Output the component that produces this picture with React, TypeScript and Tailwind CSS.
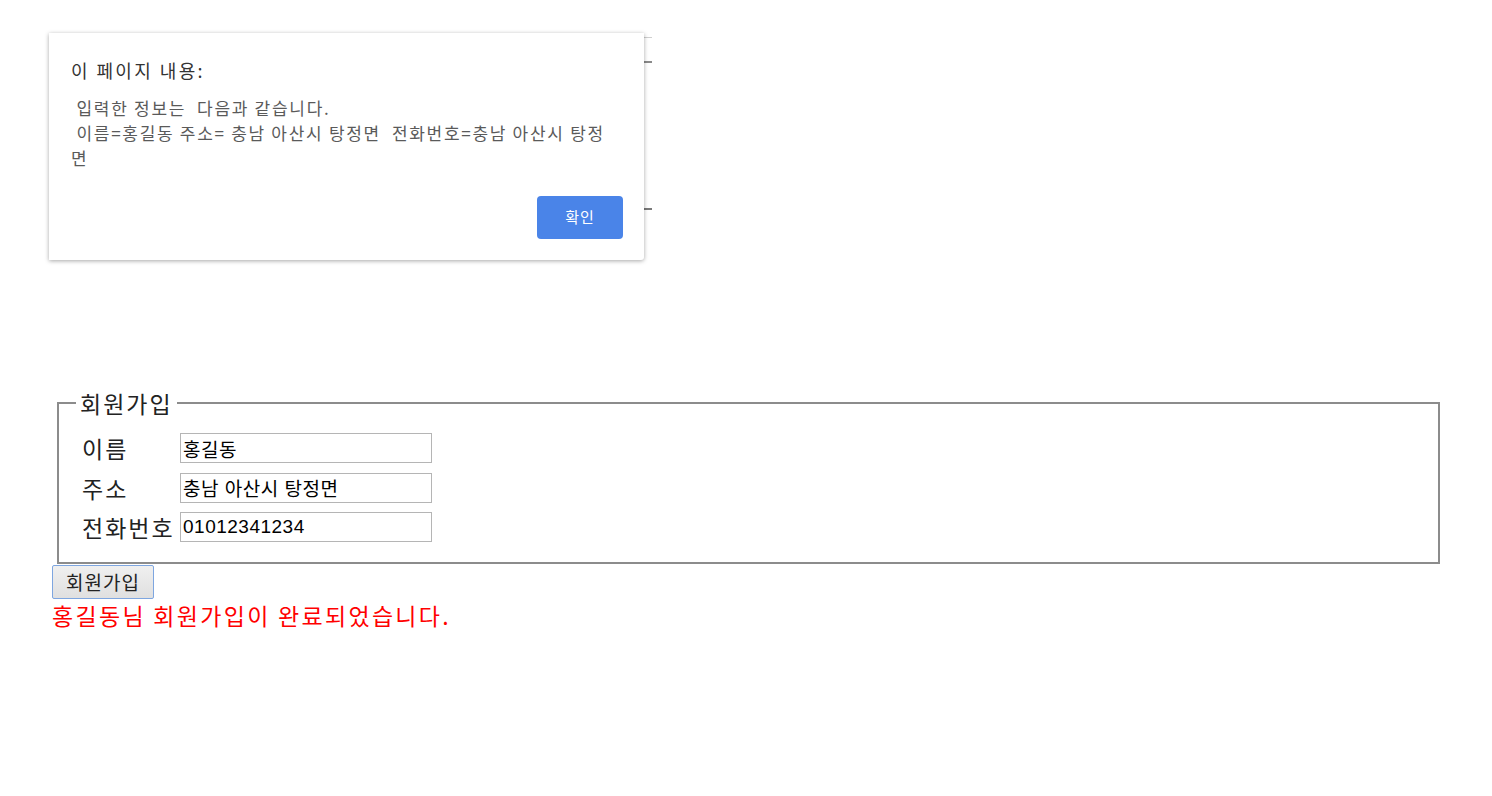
import React from 'react';

const KR = "font-['Noto_Sans_CJK_KR',sans-serif]";
const INPUT = "font-['Liberation_Sans','Noto_Sans_CJK_KR',sans-serif]";

type Field = { label: string; value: string };

const fields: Field[] = [
  { label: '이름', value: '홍길동' },
  { label: '주소', value: '충남 아산시 탕정면' },
  { label: '전화번호', value: '01012341234' },
];

function AlertDialog() {
  return (
    <div className="absolute left-[49px] top-[33px] flex h-[227px] w-[595px] flex-col rounded-br-[3px] bg-white pl-[22px] pr-[21px] pt-[25px] shadow-[0_1px_4px_rgba(0,0,0,0.35)]">
      <div className={`${KR} text-[18px] leading-[24px] tracking-[2.4px] text-[#333]`}>이 페이지 내용:</div>
      <div className={`${KR} mt-[13px] whitespace-pre-wrap text-[17px] leading-[25px] tracking-[1.7px] text-[#5a5a5a]`}>
        {' 입력한 정보는  다음과 같습니다.\n 이름=홍길동 주소= 충남 아산시 탕정면  전화번호=충남 아산시 탕정\n면'}
      </div>
      <div className="mt-auto mb-[21px] flex justify-end">
        <button className={`${KR} h-[43px] w-[86px] rounded-[4px] bg-[#4a84e8] text-[15px] tracking-[1px] text-white`}>확인</button>
      </div>
    </div>
  );
}

export default function App() {
  return (
    <div className="relative h-[796px] w-full overflow-hidden bg-white">
      {/* table edges peeking out behind the alert */}
      <div className="absolute left-[644px] top-[37px] h-px w-[8px] bg-[#cfcfcf]" />
      <div className="absolute left-[644px] top-[61px] h-[2px] w-[8px] bg-[#8a8a8a]" />
      <div className="absolute left-[644px] top-[208px] h-[2px] w-[8px] bg-[#7a7a7a]" />

      <AlertDialog />

      <div className="pl-[52px] pr-[47px] pt-[390px]">
        <fieldset className="ml-[5px] mr-[5px] border-2 border-[#8c8c8c] pb-[20px] pl-[23px] pr-4">
          <legend className={`${KR} ml-[-6px] px-[4px] text-[23px] leading-[26px] tracking-[2px] text-[#222]`}>회원가입</legend>
          <div className="mt-[17px] flex flex-col gap-[9.5px]">
            {fields.map((f) => (
              <div key={f.label} className="flex items-center">
                <span className={`${KR} w-[98px] text-[23px] leading-[30px] tracking-[2px] text-[#222]`}>{f.label}</span>
                <input
                  readOnly
                  value={f.value}
                  className={`${INPUT} h-[30px] w-[252px] border border-[#b5b5b5] px-[2px] text-[19px] tracking-[0.5px] text-black outline-none`}
                />
              </div>
            ))}
          </div>
        </fieldset>
        <button className={`${KR} mt-[1px] h-[34px] w-[102px] rounded-[2px] border border-[#7ea6e0] bg-gradient-to-b from-[#f0f0f0] to-[#e0e0e0] text-[19px] tracking-[1px] text-[#222]`}>
          회원가입
        </button>
        <div className={`${KR} mt-[1px] text-[23px] leading-[30px] tracking-[2.3px] text-[#ff0000]`}>홍길동님 회원가입이 완료되었습니다.</div>
      </div>
    </div>
  );
}
